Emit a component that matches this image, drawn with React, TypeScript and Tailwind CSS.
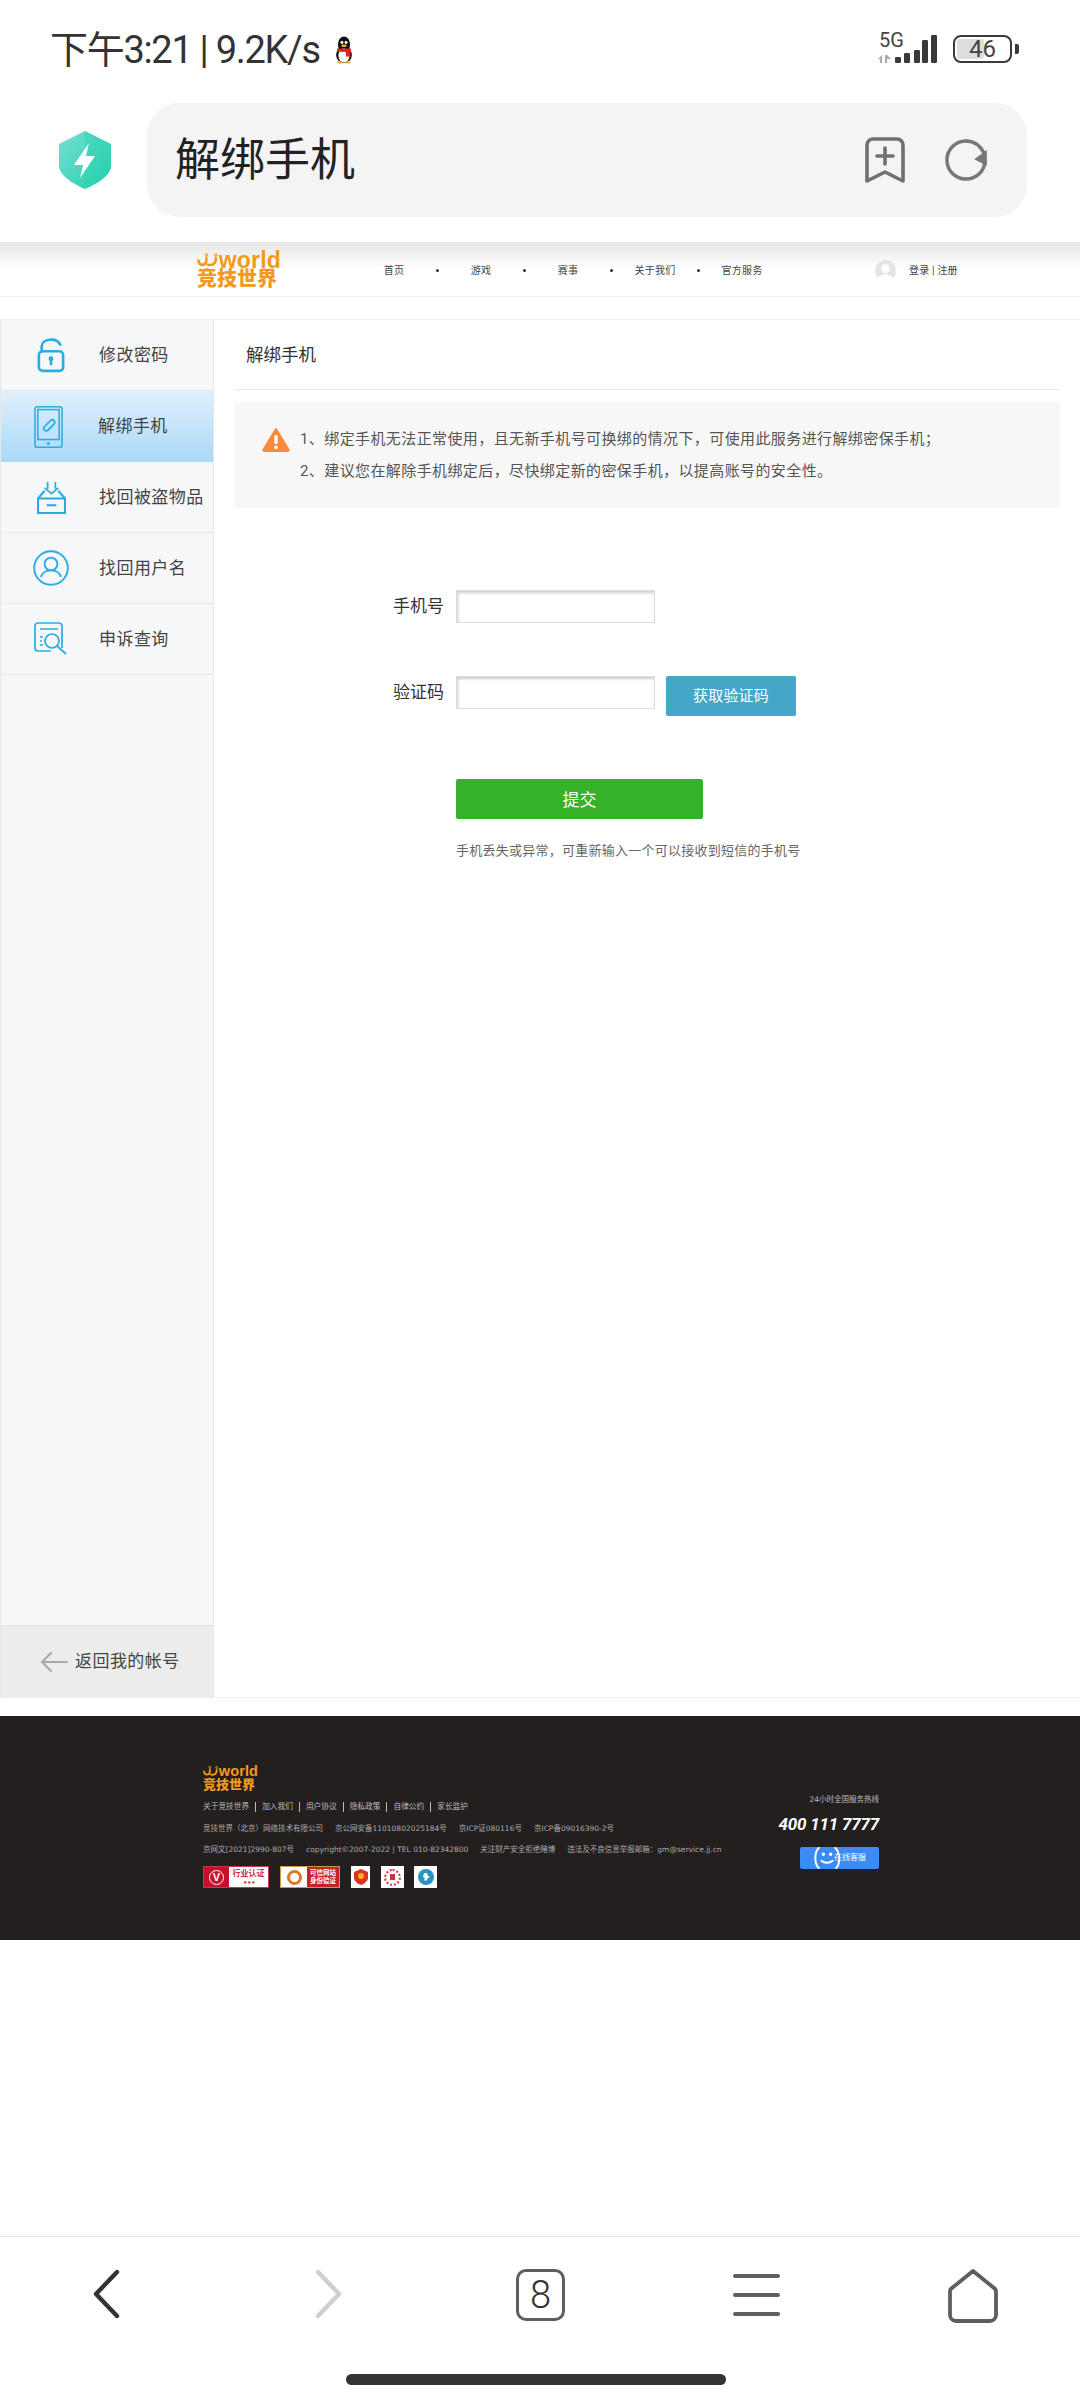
const CJK = "font-['Roboto','Noto_Sans_CJK_SC',sans-serif]"

// ─── Logo ─────────────────────────────────────────────────────
function JJLogo({ small }: { small?: boolean }) {
  return (
    <div className={small ? 'flex w-[55px] flex-col' : 'flex w-[84px] flex-col'}>
      <div className="flex items-end">
        <svg viewBox="0 0 30 18" className={small ? 'h-[11px] w-[17px]' : 'h-[17px] w-[26px]'} fill="none" stroke="#f39a1e" strokeWidth="3.6" strokeLinecap="round">
          <path d="M2 9c1 8 10 8 11 0V6" />
          <path d="M15 15c6 1 11-1 11-8V6" />
          <circle cx="13" cy="1.5" r="0.7" />
          <circle cx="26" cy="1.5" r="0.7" />
        </svg>
        <span className={small ? "font-['Liberation_Sans',sans-serif] text-[14.5px] leading-[12px] font-bold tracking-[0.1px] text-[#f39a1e]" : "font-['Liberation_Sans',sans-serif] text-[23px] leading-[17px] font-bold tracking-[0.2px] text-[#f39a1e]"}>
          world
        </span>
      </div>
      <span className={small ? "font-['Noto_Sans_CJK_SC',sans-serif] text-[13px] leading-[13px] font-black text-[#f39a1e]" : "font-['Noto_Sans_CJK_SC',sans-serif] text-[20px] leading-[18px] font-black text-[#f39a1e]"}>
        竞技世界
      </span>
    </div>
  )
}

// ─── Status bar ───────────────────────────────────────────────
function Penguin() {
  return (
    <svg viewBox="0 0 24 30" className="h-[28px] w-[24px]">
      <ellipse cx="12" cy="9" rx="6.5" ry="8.5" fill="#111" />
      <ellipse cx="12" cy="20" rx="8.5" ry="9" fill="#111" />
      <ellipse cx="12" cy="21" rx="6" ry="7.5" fill="#fff" />
      <circle cx="9.8" cy="7" r="1.6" fill="#fff" />
      <circle cx="14.2" cy="7" r="1.6" fill="#fff" />
      <ellipse cx="12" cy="10.5" rx="3" ry="1.4" fill="#f5b21a" />
      <path d="M4.5 13.5h15v3.5h-15z" fill="#e0241f" />
      <path d="M14 15h5v7h-5z" fill="#e0241f" />
      <path d="M5 27h5v2.5H5zM14 27h5v2.5h-5z" fill="#f5b21a" />
    </svg>
  )
}

function StatusBar() {
  return (
    <div className="flex h-[103px] shrink-0 items-start justify-between pt-[30px] pr-[61px] pl-[50px]">
      <div className="flex h-[40px] items-center gap-[12px]">
        <span className={`${CJK} text-[38px] leading-none tracking-[-1.3px] text-[#333]`}>下午3:21 | 9.2K/s</span>
        <Penguin />
      </div>
      <div className="flex items-start gap-[13px]">
        <div className="flex w-[63px] flex-col">
          <span className="ml-[2px] font-['Roboto',sans-serif] text-[20px] leading-[20px] text-[#444]">5G</span>
          <svg viewBox="0 0 63 14" className="h-[14px] w-[63px]">
            <path d="M1 9 5 5v8H3V9ZM8 5h2l4 4h-4v4H8Z" fill="#aaa" />
            <rect x="18" y="7" width="6" height="6" rx="1.2" fill="#3a3a3a" />
            <rect x="27" y="3" width="6" height="10" rx="1.2" fill="#3a3a3a" />
            <rect x="37" y="0" width="6" height="13" rx="1.2" fill="#3a3a3a" />
          </svg>
        </div>
        <div className="relative mt-[5px] flex items-center gap-[3px]">
          {/* the two tall signal bars sit beside 5G */}
          <svg viewBox="0 0 16 28" className="absolute top-0 left-[-31px] h-[28px] w-[16px]">
            <rect x="0" y="5" width="6" height="23" rx="1.2" fill="#3a3a3a" />
            <rect x="9" y="0" width="6" height="28" rx="1.2" fill="#3a3a3a" />
          </svg>
          <div className="relative flex h-[28px] w-[59px] items-center rounded-[8px] border-[2.5px] border-[#3a3a3a] p-[2px]">
            <div className="h-full w-[52%] rounded-[3px] bg-[#ddd]" />
            <span className="absolute inset-0 flex items-center justify-center font-['Roboto',sans-serif] text-[24px] leading-none text-[#444]">46</span>
          </div>
          <div className="h-[10px] w-[4px] rounded-r-[2px] bg-[#3a3a3a]" />
        </div>
      </div>
    </div>
  )
}

// ─── Address bar ──────────────────────────────────────────────
function AddressBar() {
  return (
    <div className="flex h-[139px] shrink-0 items-start">
      <div className="flex h-[114px] w-[147px] shrink-0 items-center pl-[58px]">
        <svg viewBox="0 0 54 58" className="h-[58px] w-[54px]">
          <defs>
            <linearGradient id="shield" x1="0" y1="0" x2="1" y2="1">
              <stop offset="0" stopColor="#79dfd8" />
              <stop offset="1" stopColor="#1fd0a6" />
            </linearGradient>
          </defs>
          <path d="M27 0 53 13v22c0 9-14 18-26 23C15 53 1 44 1 35V13Z" fill="url(#shield)" />
          <path d="M27 0 53 13v22c0 9-14 18-26 23Z" fill="#2fd3b4" opacity="0.45" />
          <path d="M31 12 16 34h9l-3 13 15-22h-9Z" fill="#fff" />
        </svg>
      </div>
      <div className="flex h-[114px] w-[880px] items-center justify-between rounded-[32px] bg-[#f4f4f4] pr-[40px] pl-[28px]">
        <span className={`${CJK} text-[45px] leading-none text-[#222]`}>解绑手机</span>
        <div className="flex items-center gap-[40px]">
          <svg viewBox="0 0 40 46" className="h-[46px] w-[40px]" fill="none" stroke="#707070" strokeWidth="3.6" strokeLinejoin="round" strokeLinecap="round">
            <path d="M8 2h24a6 6 0 0 1 6 6v36l-18-9-18 9V8a6 6 0 0 1 6-6Z" />
            <path d="M20 11v16M12 19h16" />
          </svg>
          <svg viewBox="0 0 44 44" className="h-[44px] w-[42px]" fill="none" stroke="#777" strokeWidth="3.6" strokeLinecap="round">
            <path d="M22 2a20 20 0 1 0 20 20" />
            <path d="M22 2c9 0 15 5 19 13" />
            <path d="M42 15v10l-8-4Z" fill="#777" />
          </svg>
        </div>
      </div>
    </div>
  )
}

// ─── Site header ──────────────────────────────────────────────
const NAV = ['首页', '游戏', '赛事', '关于我们', '官方服务']

function SiteHeader() {
  return (
    <div className="flex h-[55px] shrink-0 items-center border-b border-[#eee] bg-gradient-to-b from-[#e6e6e6] via-white to-white pl-[197px]">
      <JJLogo />
      <div className="ml-[83px] flex items-center pt-[3px]">
        {NAV.map((item) => (
          <div key={item} className="flex w-[87px] items-center">
            <span className={`${CJK} w-[60px] shrink-0 text-center text-[10px] leading-none tracking-[0.2px] text-[#444]`}>{item}</span>
            {item !== '官方服务' && <span className="ml-[12px] h-[3px] w-[3px] rounded-full bg-[#333]" />}
          </div>
        ))}
      </div>
      <div className="ml-[76px] flex items-center gap-[13px] pt-[3px]">
        <svg viewBox="0 0 22 22" className="h-[21px] w-[21px]">
          <circle cx="11" cy="11" r="11" fill="#e4e4e4" />
          <circle cx="11" cy="9" r="4.5" fill="#fff" />
          <path d="M3 19c2-5 14-5 16 0a11 11 0 0 1-16 0Z" fill="#fff" />
        </svg>
        <span className={`${CJK} text-[10px] leading-none tracking-[0.2px] text-[#444]`}>登录 | 注册</span>
      </div>
    </div>
  )
}

// ─── Sidebar ──────────────────────────────────────────────────
function IconLock() {
  return (
    <svg viewBox="0 0 30 38" className="h-[36px] w-[28px]" fill="none" stroke="#2bace2" strokeWidth="2.8">
      <path d="M5 15V10C5 1 21 0 25 8" strokeLinecap="round" />
      <rect x="2" y="15" width="26" height="21" rx="4" />
      <circle cx="15" cy="23" r="2.6" fill="#2bace2" stroke="none" />
      <path d="M15 24v6" />
    </svg>
  )
}
function IconPhone() {
  return (
    <svg viewBox="0 0 30 44" className="mr-[6px] h-[44px] w-[29px]" fill="none" stroke="#2bace2" strokeWidth="1.6">
      <rect x="1" y="1" width="28" height="42" rx="2.5" />
      <rect x="4" y="4" width="22" height="31" />
      <circle cx="15" cy="39" r="1.6" fill="#2bace2" stroke="none" />
      <path d="m10.5 22 7-7a2.6 2.6 0 0 1 3.6 3.6l-7 7a2.6 2.6 0 0 1-3.6-3.6Z" strokeWidth="1.8" />
    </svg>
  )
}
function IconBox() {
  return (
    <svg viewBox="0 0 30 34" className="h-[33px] w-[29px]" fill="none" stroke="#2bace2" strokeWidth="2.2">
      <path d="M1 18 8 10M29 18l-7-8M1 18h28v15H1Z" />
      <path d="M11 1v7M19 1v7M8 7l7 6 7-6" strokeWidth="1.8" />
      <path d="M10 25h10" />
    </svg>
  )
}
function IconUser() {
  return (
    <svg viewBox="0 0 36 36" className="h-[36px] w-[36px]" fill="none" stroke="#2bace2" strokeWidth="1.9">
      <circle cx="18" cy="18" r="16.8" />
      <circle cx="18" cy="14" r="6.4" />
      <path d="M8 27c2-9 18-9 20 0" />
    </svg>
  )
}
function IconSearch() {
  return (
    <svg viewBox="0 0 34 34" className="h-[34px] w-[34px]" fill="none" stroke="#2bace2" strokeWidth="1.7">
      <path d="M28 26V4a3 3 0 0 0-3-3H4a3 3 0 0 0-3 3v22a3 3 0 0 0 3 3h13" />
      <path d="M6 7h18M6 15h3M6 19h2M6 23h3" />
      <circle cx="18" cy="19" r="7" />
      <path d="m23 24 9 8" />
    </svg>
  )
}

const MENU = [
  { label: '修改密码', icon: <IconLock /> },
  { label: '解绑手机', icon: <IconPhone />, active: true },
  { label: '找回被盗物品', icon: <IconBox /> },
  { label: '找回用户名', icon: <IconUser /> },
  { label: '申诉查询', icon: <IconSearch /> },
]

function Sidebar() {
  return (
    <div className="flex w-[214px] shrink-0 flex-col border-x border-[#e8e8e8] bg-[#f5f7f9]">
      {MENU.map((m) => (
        <div
          key={m.label}
          className={m.active
            ? 'flex h-[71px] items-center bg-gradient-to-b from-[#e0f0fc] to-[#a9d9f8] pl-[31px]'
            : 'flex h-[71px] items-center border-b border-[#e8e8e8] pl-[31px]'}
        >
          <div className="flex w-[38px] shrink-0 items-center justify-center">{m.icon}</div>
          <span className={`${CJK} ${m.active ? 'ml-[28px]' : 'ml-[29px]'} whitespace-nowrap text-[17px] leading-none tracking-[0.45px] text-[#444]`}>{m.label}</span>
        </div>
      ))}
      <div className="flex-1" />
      <div className="flex h-[72px] items-center gap-[7px] border-t border-[#e2e2e2] bg-[#ececec] pl-[39px]">
        <svg viewBox="0 0 28 22" className="h-[22px] w-[28px]" fill="none" stroke="#aaa" strokeWidth="2.2" strokeLinecap="round" strokeLinejoin="round">
          <path d="M27 11H2M11 2l-9 9 9 9" />
        </svg>
        <span className={`${CJK} text-[17px] leading-none tracking-[0.45px] text-[#444]`}>返回我的帐号</span>
      </div>
    </div>
  )
}

// ─── Form ─────────────────────────────────────────────────────
function FormRow({ label, children }: { label: string; children?: React.ReactNode }) {
  return (
    <div className="flex items-start">
      <span className={`${CJK} flex h-[33px] w-[242px] shrink-0 items-center justify-end pr-[12px] text-[17px] leading-none text-[#333]`}>{label}</span>
      <input className="h-[33px] w-[199px] border border-[#ddd] bg-white shadow-[inset_1px_2px_3px_rgba(0,0,0,0.2)] outline-none" />
      {children}
    </div>
  )
}

function Content() {
  return (
    <div className="flex flex-1 flex-col">
      <div className="mr-[20px] ml-[21px] flex h-[70px] items-center border-b border-[#eaeaea] pt-[2px] pl-[11px]">
        <span className={`${CJK} text-[17.5px] leading-none text-[#333]`}>解绑手机</span>
      </div>
      <div className="mt-[12px] mr-[20px] ml-[21px] flex h-[106px] bg-[#f7f7f7] pt-[25px] pl-[27px]">
        <svg viewBox="0 0 28 25" className="h-[25px] w-[28px] shrink-0">
          <path d="M14 2 26.5 22.5a1 1 0 0 1-1 1.5h-23a1 1 0 0 1-1-1.5Z" fill="#fb8a3c" stroke="#fb8a3c" strokeWidth="2" strokeLinejoin="round" />
          <rect x="12.3" y="8" width="3.4" height="9" rx="1.5" fill="#fff" />
          <circle cx="14" cy="20.3" r="1.9" fill="#fff" />
        </svg>
        <div className={`${CJK} mt-[4px] ml-[10px] flex flex-col gap-[16px] text-[15px] leading-[16px] tracking-[0.4px] text-[#555]`}>
          <p>1、绑定手机无法正常使用，且无新手机号可换绑的情况下，可使用此服务进行解绑密保手机；</p>
          <p>2、建议您在解除手机绑定后，尽快绑定新的密保手机，以提高账号的安全性。</p>
        </div>
      </div>
      <div className="mt-[82px] flex flex-col">
        <FormRow label="手机号" />
        <div className="mt-[53px]">
          <FormRow label="验证码">
            <button className={`${CJK} ml-[11px] h-[40px] w-[130px] rounded-[2px] bg-[#45a6c8] pt-[1px] text-[15px] leading-none tracking-[0.2px] text-white`}>获取验证码</button>
          </FormRow>
        </div>
        <div className="mt-[63px] flex flex-col pl-[242px]">
          <button className={`${CJK} h-[40px] w-[247px] rounded-[2px] bg-[#36b12a] pt-[2px] text-[17px] leading-none text-white`}>提交</button>
          <span className={`${CJK} mt-[24px] whitespace-nowrap text-[13px] leading-[16px] tracking-[0.25px] text-[#666]`}>手机丢失或异常，可重新输入一个可以接收到短信的手机号</span>
        </div>
      </div>
    </div>
  )
}

// ─── Footer ───────────────────────────────────────────────────
const FOOT_LINKS = ['关于竞技世界', '加入我们', '用户协议', '隐私政策', '自律公约', '家长监护']
const FOOT_FONT = "font-['DejaVu_Sans','Noto_Sans_CJK_SC',sans-serif]"

function Footer() {
  return (
    <div className="flex h-[224px] shrink-0 justify-between bg-[#231f1f] pr-[201px] pl-[203px]">
      <div className="flex flex-col pt-[49px]">
        <JJLogo small />
        <div className={`${FOOT_FONT} mt-[11px] flex h-[12px] items-center text-[7.7px] leading-none text-[#bbb]`}>
          {FOOT_LINKS.map((l) => (
            <span key={l} className={l !== '家长监护' ? 'mr-[6px] border-r border-[#bbb] pr-[6px] leading-[10px]' : 'leading-[10px]'}>{l}</span>
          ))}
        </div>
        <div className={`${FOOT_FONT} mt-[10px] flex gap-[12px] text-[7.5px] leading-[11px] whitespace-nowrap text-[#aaa]`}>
          <span>竞技世界（北京）网络技术有限公司</span>
          <span>京公网安备11010802025184号</span>
          <span>京ICP证080116号</span>
          <span>京ICP备09016390-2号</span>
        </div>
        <div className={`${FOOT_FONT} mt-[10px] flex gap-[12px] text-[7.5px] leading-[11px] whitespace-nowrap text-[#aaa]`}>
          <span>京网文[2021]2990-807号</span>
          <span>copyright©2007-2022 | TEL 010-82342800</span>
          <span>关注财产安全拒绝赌博</span>
          <span>违法及不良信息举报邮箱：gm@service.jj.cn</span>
        </div>
        <div className="mt-[11px] flex items-center">
          <div className="flex h-[22px] w-[66px] border border-[#c23a4a] bg-white">
            <div className="flex w-[25px] items-center justify-center bg-[#c8102e]">
              <div className="flex h-[15px] w-[15px] items-center justify-center rounded-full border border-white">
                <span className="font-['Liberation_Sans',sans-serif] text-[11px] leading-none font-bold text-white">V</span>
              </div>
            </div>
            <div className="flex flex-1 flex-col items-center pt-[2px]">
              <span className={`${CJK} text-[8px] leading-[10px] font-bold text-[#c8303f]`}>行业认证</span>
              <span className="text-[5px] leading-[6px] text-[#c8303f]">★★★</span>
            </div>
          </div>
          <div className="ml-[11px] flex h-[22px] w-[60px] border border-[#c99a4a] bg-white">
            <div className="flex w-[26px] items-center justify-center">
              <div className="h-[15px] w-[15px] rounded-full border-[3px] border-[#e2762a]" />
            </div>
            <span className={`${CJK} flex flex-1 items-center justify-center bg-[#c8202a] text-center text-[6.5px] leading-[8px] font-bold text-white`}>可信网站<br />身份验证</span>
          </div>
          <div className="ml-[11px] flex h-[22px] w-[19px] items-center justify-center bg-white">
            <svg viewBox="0 0 14 16" className="h-[16px] w-[14px]">
              <path d="M7 0 14 3v6c0 3-4 6-7 7-3-1-7-4-7-7V3Z" fill="#d9321f" />
              <circle cx="7" cy="7" r="3" fill="#f5b21a" />
            </svg>
          </div>
          <div className="ml-[11px] flex h-[22px] w-[23px] items-center justify-center bg-white">
            <div className="flex h-[17px] w-[17px] items-center justify-center rounded-full border-[2px] border-dotted border-[#d0303a]">
              <div className="h-[6px] w-[5px] bg-[#d0303a]" />
            </div>
          </div>
          <div className="ml-[10px] flex h-[22px] w-[23px] items-center justify-center bg-white">
            <svg viewBox="0 0 16 16" className="h-[16px] w-[16px]">
              <circle cx="8" cy="8" r="8" fill="#2b93c4" />
              <path d="M6 4h3l1 3 2 1-2 1-2 3-2-1 1-2-2-1Z" fill="#fff" />
            </svg>
          </div>
        </div>
      </div>
      <div className="flex flex-col items-end pt-[79px]">
        <span className={`${FOOT_FONT} text-[7.5px] leading-[10px] text-[#bbb]`}>24小时全国服务热线</span>
        <span className="mt-[9px] font-['Roboto',sans-serif] text-[17px] leading-[20px] font-bold tracking-[-0.2px] text-white italic">400 111 7777</span>
        <div className="relative mt-[13px] flex h-[22px] w-[79px] items-center justify-end rounded-[2px] bg-[#3a8bf5] pr-[13px]">
          <svg viewBox="0 0 30 24" className="absolute top-0 left-[13px] h-[22px] w-[28px]" fill="none" stroke="#fff" strokeWidth="2.2" strokeLinecap="round">
            <path d="M6 1C1 6 1 18 6 23M24 1c5 4 6 17 1 22" />
            <path d="M9 15c3 3 9 3 12 0" />
            <circle cx="11" cy="8" r="0.8" fill="#fff" />
            <circle cx="19" cy="8" r="0.8" fill="#fff" />
          </svg>
          <span className={`${CJK} text-[8px] leading-none text-white`}>在线客服</span>
        </div>
      </div>
    </div>
  )
}

// ─── Bottom bar ───────────────────────────────────────────────
function BottomBar() {
  return (
    <div className="flex h-[164px] shrink-0 flex-col border-t border-[#e5e5e5]">
      <div className="flex h-[137px] items-start pt-[32px] pl-[92px]">
        <svg viewBox="0 0 28 50" className="h-[50px] w-[28px]" fill="none" stroke="#333" strokeWidth="4.4" strokeLinecap="round" strokeLinejoin="round">
          <path d="M25 3 4 25l21 22" />
        </svg>
        <svg viewBox="0 0 28 50" className="ml-[195px] h-[50px] w-[28px]" fill="none" stroke="#cfcfcf" strokeWidth="4.4" strokeLinecap="round" strokeLinejoin="round">
          <path d="M3 3l21 22L3 47" />
        </svg>
        <div className={`${CJK} ml-[173px] flex h-[52px] w-[49px] items-center justify-center rounded-[10px] border-[3.5px] border-[#5e5e5e] text-[38px] leading-none font-light text-[#333]`}>8</div>
        <div className="ml-[168px] flex h-[52px] w-[47px] flex-col justify-between py-[5px]">
          <div className="h-[4px] rounded-full bg-[#5e5e5e]" />
          <div className="h-[4px] rounded-full bg-[#5e5e5e]" />
          <div className="h-[4px] rounded-full bg-[#5e5e5e]" />
        </div>
        <svg viewBox="0 0 50 54" className="ml-[168px] h-[54px] w-[50px]" fill="none" stroke="#5e5e5e" strokeWidth="3.8" strokeLinejoin="round">
          <path d="M25 2 46 19a4 4 0 0 1 2 3v24a6 6 0 0 1-6 6H8a6 6 0 0 1-6-6V22a4 4 0 0 1 2-3Z" />
        </svg>
      </div>
      <div className="ml-[346px] h-[11px] w-[380px] rounded-full bg-[#333]" />
    </div>
  )
}

export default function App() {
  return (
    <div className="flex h-[2400px] w-[1080px] flex-col overflow-hidden bg-white">
      <StatusBar />
      <AddressBar />
      <SiteHeader />
      <div className="mt-[22px] flex h-[1378px] shrink-0 border-t border-[#eee]">
        <Sidebar />
        <Content />
      </div>
      <div className="h-px w-full bg-[#eee]" />
      <div className="h-[18px] shrink-0" />
      <Footer />
      <div className="flex-1" />
      <BottomBar />
    </div>
  )
}
